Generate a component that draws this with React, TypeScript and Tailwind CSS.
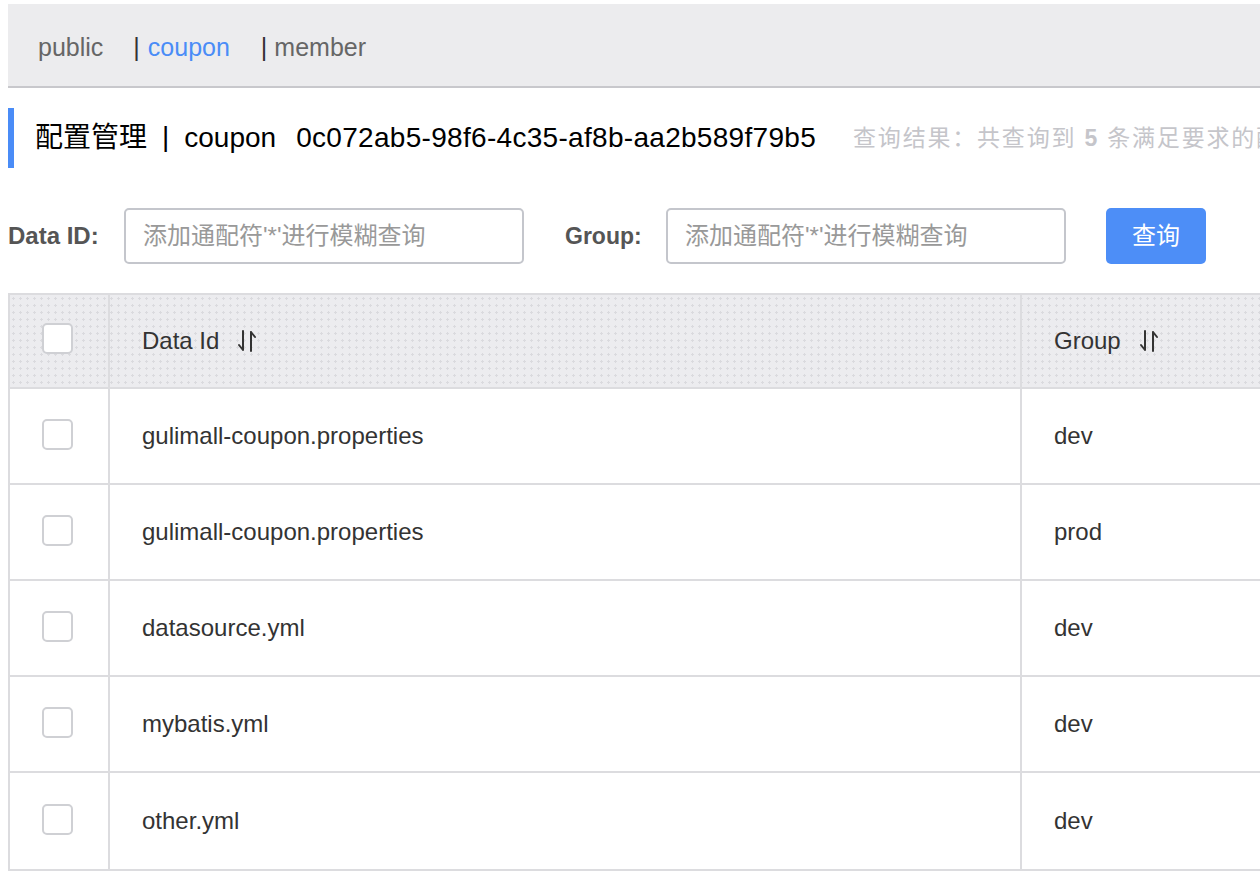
import React from "react";

const rows = [
  { id: "gulimall-coupon.properties", group: "dev" },
  { id: "gulimall-coupon.properties", group: "prod" },
  { id: "datasource.yml", group: "dev" },
  { id: "mybatis.yml", group: "dev" },
  { id: "other.yml", group: "dev" },
];

const SortIcon = () => (
  <svg width="22" height="24" viewBox="0 0 22 24" fill="none" stroke="#333" strokeWidth="2" strokeLinecap="round">
    <path d="M7 2 V21 M7 21 L3 16" />
    <path d="M15 22 V3 M15 3 L19 8" />
  </svg>
);

const Checkbox = () => (
  <div className="w-[31px] h-[31px] rounded-[5px] border-2 border-[#cfd0d4] bg-white" />
);

const App = () => {
  return (
    <div className="w-[1260px] h-[892px] overflow-hidden bg-white pl-2 pt-1 whitespace-nowrap font-['Liberation_Sans','Noto_Sans_CJK_SC',sans-serif]">
      {/* namespace tabs */}
      <div className="h-[84px] bg-[#ececee] border-b-2 border-[#c8c8cc] flex items-center pl-[30px] pt-[5px] text-[25px] text-[#666]">
        <span>public</span>
        <span className="ml-[30px] text-[#333]">|</span>
        <span className="ml-[8px] text-[#4a8cf7]">coupon</span>
        <span className="ml-[31px] text-[#333]">|</span>
        <span className="ml-[7px]">member</span>
      </div>

      {/* title */}
      <div className="mt-[20px] h-[60px] flex items-center border-l-[6px] border-[#4a8cf7] pl-[21px] text-[28px] text-black">
        <span>配置管理</span>
        <span className="ml-[15px] mr-[15px] pb-[2px]">|</span>
        <span>coupon</span>
        <span className="ml-[20px] tracking-[0.3px]">0c072ab5-98f6-4c35-af8b-aa2b589f79b5</span>
        <span className="ml-[37px] text-[23px] tracking-[1.8px] text-[#c5c5ca]">
          查询结果：共查询到 <b className="font-bold">5</b> 条满足要求的配置。
        </span>
      </div>

      {/* search */}
      <div className="mt-[40px] flex items-center h-[56px]">
        <label className="w-[116px] text-[24px] font-bold text-[#555]">Data ID:</label>
        <div className="w-[400px] h-[56px] border-2 border-[#c4c6cc] rounded-[5px] flex items-center pl-[17px] text-[24px] text-[#999]">
          添加通配符'*'进行模糊查询
        </div>
        <label className="ml-[41px] w-[101px] text-[23px] font-bold text-[#555]">Group:</label>
        <div className="w-[400px] h-[56px] border-2 border-[#c4c6cc] rounded-[5px] flex items-center pl-[17px] text-[24px] text-[#999]">
          添加通配符'*'进行模糊查询
        </div>
        <button className="ml-[40px] w-[100px] h-[56px] rounded-[5px] bg-[#4d8ef7] text-white text-[24px]">
          查询
        </button>
      </div>

      {/* table */}
      <div className="mt-[29px] w-[1400px] border-2 border-[#dcdcdf]">
        <div className="flex h-[94px] border-b-2 border-[#dcdcdf] bg-[#ececef] bg-[radial-gradient(#dadade_1px,transparent_1.2px)] bg-[length:7px_7px] text-[24px] text-[#333]">
          <div className="w-[100px] border-r-2 border-[#dcdcdf] flex items-center justify-center pr-[3px] pb-[6px]">
            <Checkbox />
          </div>
          <div className="w-[912px] border-r-2 border-[#dcdcdf] flex items-center pl-[32px] gap-[17px]">
            <span>Data Id</span>
            <SortIcon />
          </div>
          <div className="flex-1 flex items-center pl-[32px] gap-[17px]">
            <span>Group</span>
            <SortIcon />
          </div>
        </div>
        {rows.map((r, i) => (
          <div
            key={i}
            className={`flex h-[96px] text-[24px] text-[#333] ${i < rows.length - 1 ? "border-b-2 border-[#dcdcdf]" : ""}`}
          >
            <div className="w-[100px] border-r-2 border-[#dcdcdf] flex items-center justify-center pr-[3px] pb-[4px]">
              <Checkbox />
            </div>
            <div className="w-[912px] border-r-2 border-[#dcdcdf] flex items-center pl-[32px]">
              {r.id}
            </div>
            <div className="flex-1 flex items-center pl-[32px]">{r.group}</div>
          </div>
        ))}
      </div>
    </div>
  );
};

export default App;
